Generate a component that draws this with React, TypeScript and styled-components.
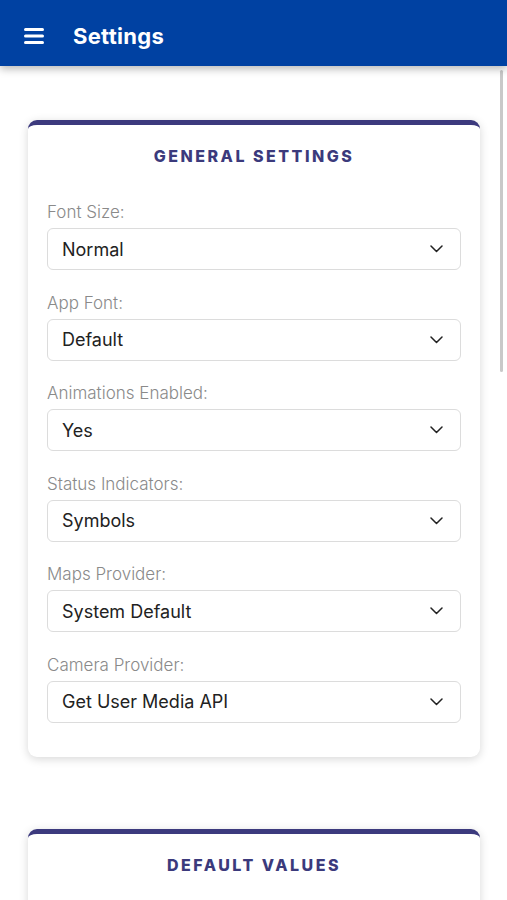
import React from "react";
import styled, { createGlobalStyle } from "styled-components";

const GlobalStyle = createGlobalStyle`
    html, body {
        margin: 0;
        padding: 0;
        background: #ffffff;
        font-family: Inter, "Noto Sans", sans-serif;
        overflow: hidden;
    }
`;

const Page = styled.div`
    height: 900px;
    display: flex;
    flex-direction: column;
    position: relative;
`;

const Toolbar = styled.header`
    height: 66px;
    box-sizing: border-box;
    flex-shrink: 0;
    background: #0041a2;
    display: flex;
    align-items: center;
    padding: 5px 0 0 24px;
    gap: 29px;
    box-shadow: 0 3px 8px rgba(0, 0, 0, 0.28);
    position: relative;
    z-index: 2;
`;

const MenuButton = styled.button`
    background: none;
    border: none;
    padding: 0;
    display: flex;
    cursor: pointer;
`;

const Title = styled.h1`
    margin: 0;
    color: #ffffff;
    font-size: 22px;
    font-weight: 700;
    letter-spacing: 0.3px;
`;

const Content = styled.main`
    flex: 1;
    overflow: hidden;
    padding: 54px 27px 0 28px;
    display: flex;
    flex-direction: column;
    gap: 72px;
`;

const ScrollThumb = styled.div`
    position: absolute;
    right: 4px;
    top: 70px;
    width: 3px;
    height: 302px;
    border-radius: 2px;
    background: #c9c9c9;
`;

const Card = styled.section<{ $minHeight?: number }>`
    background: #ffffff;
    border-top: 5px solid #3c3a7e;
    border-radius: 9px;
    box-shadow: 0 2px 10px rgba(0, 0, 0, 0.16);
    padding: 21px 19px 34px;
    min-height: ${({ $minHeight }) => ($minHeight ? `${$minHeight}px` : "auto")};
    flex-shrink: 0;
`;

const CardTitle = styled.h2`
    margin: 0 0 34px;
    text-align: center;
    color: #3b3a7c;
    font-size: 16px;
    font-weight: 800;
    letter-spacing: 2.5px;
    text-transform: uppercase;
`;

const Field = styled.div`
    display: flex;
    flex-direction: column;
    gap: 4px;
    margin-bottom: 20.6px;

    &:last-child {
        margin-bottom: 0;
    }
`;

const Label = styled.label`
    color: #8a8a8a;
    font-size: 17px;
    font-weight: 300;
    line-height: 24px;
`;

const SelectBox = styled.div`
    height: 42px;
    box-sizing: border-box;
    border: 1px solid #dcdcdc;
    border-radius: 6px;
    display: flex;
    align-items: center;
    justify-content: space-between;
    padding: 0 17px 0 14px;
    color: #222222;
    font-size: 18px;
    font-weight: 400;
`;

const Hamburger = () => (
    <svg width="20" height="18" viewBox="0 0 20 18">
        <rect x="0" y="1" width="20" height="3" rx="1.5" fill="#fff" />
        <rect x="0" y="7.5" width="20" height="3" rx="1.5" fill="#fff" />
        <rect x="0" y="14" width="20" height="3" rx="1.5" fill="#fff" />
    </svg>
);

const Chevron = () => (
    <svg width="13" height="8" viewBox="0 0 13 8">
        <path d="M1 1 L6.5 6.5 L12 1" fill="none" stroke="#222" strokeWidth="1.5" strokeLinecap="round" strokeLinejoin="round" />
    </svg>
);

const generalSettings = [
    { label: "Font Size:", value: "Normal" },
    { label: "App Font:", value: "Default" },
    { label: "Animations Enabled:", value: "Yes" },
    { label: "Status Indicators:", value: "Symbols" },
    { label: "Maps Provider:", value: "System Default" },
    { label: "Camera Provider:", value: "Get User Media API" },
];

const App: React.FC = () => {
    return (
        <Page>
            <GlobalStyle />
            <Toolbar>
                <MenuButton aria-label="Menu">
                    <Hamburger />
                </MenuButton>
                <Title>Settings</Title>
            </Toolbar>
            <Content>
                <Card>
                    <CardTitle>General Settings</CardTitle>
                    {generalSettings.map((s) => (
                        <Field key={s.label}>
                            <Label>{s.label}</Label>
                            <SelectBox>
                                <span>{s.value}</span>
                                <Chevron />
                            </SelectBox>
                        </Field>
                    ))}
                </Card>
                <Card $minHeight={400}>
                    <CardTitle>Default Values</CardTitle>
                </Card>
            </Content>
            <ScrollThumb />
        </Page>
    );
};

export default App;
